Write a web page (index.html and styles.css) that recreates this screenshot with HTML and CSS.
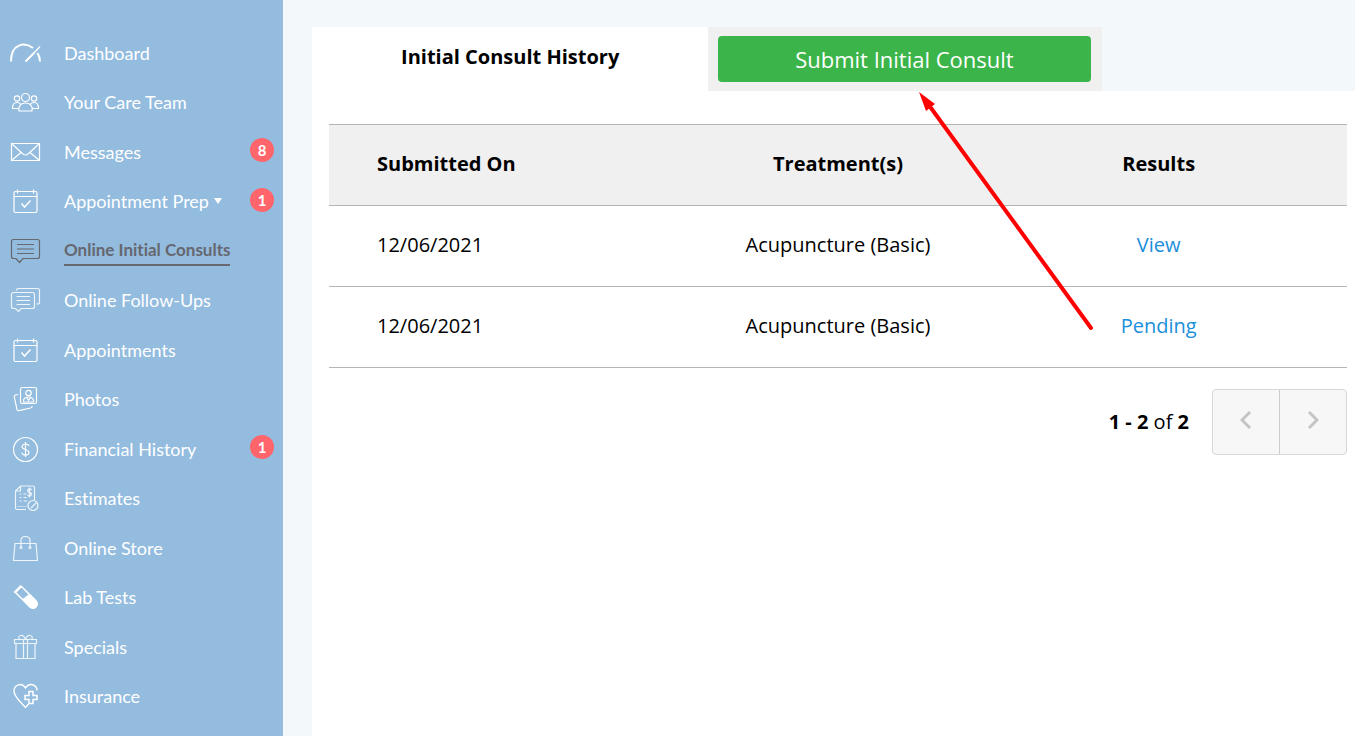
FILE: index.html
```
<!DOCTYPE html>
<html lang="en">
<head>
    <meta charset="UTF-8">
    <meta name="viewport" content="width=device-width, initial-scale=1.0">
    <title>Online Initial Consults</title>
    <link rel="stylesheet" href="styles.css">
</head>
<body>
    <div class="page">
        <nav class="sidebar">
            <ul class="menu">
                <li><a href="#">
                    <svg class="icon" viewBox="0 0 34 34"><path stroke-width="2" d="M3 25.500C3 7 17 6 25 12"/><path stroke-width="2" d="M29.500 17q2.500 4 2.500 8.500M17.500 25.500l8.500-8.500"/><path stroke-width="1.300" d="M25 18l7-7.500"/></svg>
                    <span>Dashboard</span></a></li>
                <li><a href="#">
                    <svg class="icon" viewBox="0 0 34 34"><circle cx="17.500" cy="12.500" r="4"/><circle cx="9" cy="13.500" r="2.700"/><circle cx="26" cy="13.500" r="2.700"/><path d="M11 26c-1-5 2-8 6.500-8s7.500 3 6.500 8zM10.500 23.500h-6c0-4 2-6 4.500-6 1.500 0 2.500.5 3.500 1.500M24.500 23.500h6c0-4-2-6-4.500-6-1.500 0-2.500.5-3.500 1.500"/></svg>
                    <span>Your Care Team</span></a></li>
                <li><a href="#">
                    <svg class="icon" viewBox="0 0 34 34"><path d="M3.500 8.500h28v17h-28zM3.500 8.500l11.500 10.500q2.500 2 5 0l11.500-10.500M3.500 25.500l9.500-8M31.500 25.500l-9.500-8"/></svg>
                    <span>Messages</span></a><b class="badge">8</b></li>
                <li><a href="#">
                    <svg class="icon" viewBox="0 0 34 34"><rect x="6" y="7.500" width="23" height="21" rx="1.500"/><path d="M6 12.500h23M9.500 5.500v4M25.500 5.500v4"/><path stroke-width="1.500" d="M13.500 19.500l3 3.500 6-6.500"/></svg>
                    <span>Appointment Prep</span><i class="caret"></i></a><b class="badge">1</b></li>
                <li class="active"><a href="#">
                    <svg class="icon" viewBox="0 0 34 34"><path d="M5.500 5.500h24q2 0 2 2v15q0 2-2 2H15l-3.500 4-3.500-4H5.500q-2 0-2-2v-15q0-2 2-2z"/><path d="M9 10.500h17M9 15h17M9 19.500h17"/></svg>
                    <span>Online Initial Consults</span></a></li>
                <li><a href="#">
                    <svg class="icon faint" viewBox="0 0 34 34"><path d="M5.500 9.500h19q2 0 2 2v12q0 2-2 2H13l-2.500 3-3-3h-2q-2 0-2-2v-12q0-2 2-2z"/><path d="M8.500 13.500H22M8.500 17.500H22M8.500 21.500H22M8.500 7.500q0-2 2-2h19q2 0 2 2V19q0 2-2 2h-1"/></svg>
                    <span>Online Follow-Ups</span></a></li>
                <li><a href="#">
                    <svg class="icon" viewBox="0 0 34 34"><rect x="6" y="7.500" width="23" height="21" rx="1.500"/><path d="M6 12.500h23M9.500 5.500v4M25.500 5.500v4"/><path stroke-width="1.500" d="M13.500 19.500l3 3.500 6-6.500"/></svg>
                    <span>Appointments</span></a></li>
                <li><a href="#">
                    <svg class="icon" viewBox="0 0 34 34"><rect x="12.500" y="5.500" width="16" height="16" rx="1.500"/><circle cx="20.500" cy="11" r="2.700"/><path d="M15.500 20v-2q1-3 5-3t5 3v2zM18.500 15.500l2 3 2-3M10 12.500l-2.500.5q-1.500.5-1.200 2L9 27.500q.5 1.500 2 1.200l11.500-2.700q1.500-.5 1.800-2"/></svg>
                    <span>Photos</span></a></li>
                <li><a href="#">
                    <svg class="icon" viewBox="0 0 34 34"><circle cx="17.500" cy="17.500" r="12"/><path d="M17.500 10v15M21 14q-.5-2-3.500-2t-3.500 2.500q0 2 3.500 3t3.500 3q0 2.500-3.500 2.500T14 20.500"/></svg>
                    <span>Financial History</span></a><b class="badge">1</b></li>
                <li><a href="#">
                    <svg class="icon faint" viewBox="0 0 34 34"><path d="M18 28.500H9q-1.500 0-1.500-1.500V10l5-5H25q1.500 0 1.500 1.500V19M7.500 10h5V5"/><circle cx="25" cy="24.500" r="5"/><path d="M23 27l5-5M11.500 13h2M15.500 13h3M11.500 16.500h2M15.500 16.500h3M11.500 20h2M15.500 20h3.500"/><path d="M9.500 25.500h9" stroke-dasharray="1 1"/><path stroke-width="1.300" d="M23.500 9q-.5-1-2-1t-1.800 1.500 1.800 2 1.800 2-1.800 1.500-2-1M21.500 6.500v10"/></svg>
                    <span>Estimates</span></a></li>
                <li><a href="#">
                    <svg class="icon faint" viewBox="0 0 34 34"><path d="M7 12.500h21l1.500 17h-24zM13 16V9.500q0-4 4.500-4t4.500 4V16"/><circle cx="13" cy="16.500" r="1"/><circle cx="22" cy="16.500" r="1"/></svg>
                    <span>Online Store</span></a></li>
                <li><a href="#">
                    <svg class="icon" viewBox="0 0 34 34"><path stroke-width="1.500" d="M6 12.500l7-7M7.500 12.500l6-6L28 21q2 3-.5 5.500t-5.500.5z"/><path class="solid" d="M15 19.500l6.500-5L28.500 21.500q2 3-.5 5.500t-5.500.5z"/></svg>
                    <span>Lab Tests</span></a></li>
                <li><a href="#">
                    <svg class="icon faint" viewBox="0 0 34 34"><path d="M6.500 9.500h22v4h-22zM8 13.500h19v15H8zM15.500 9.500v19M19.500 9.500v19M17.500 9.500c-1-3-3-4.500-5-4-2.500.5-2 4-.5 4M17.500 9.500c1-3 3-4.500 5-4 2.500.5 2 4 .5 4"/></svg>
                    <span>Specials</span></a></li>
                <li><a href="#">
                    <svg class="icon" viewBox="0 0 34 34"><path stroke-width="1.400" d="M20.500 25l-3 3.500C12 22 6 18 6 12c0-6.500 8-9 11.500-3C21 3 29 5.500 29 11.500"/><path stroke-width="1.500" d="M21 12.500h4v4h4v4h-4v4h-4v-4h-4v-4h4z"/></svg>
                    <span>Insurance</span></a></li>
            </ul>
        </nav>

        <main class="content">
            <div class="tabs">
                <h1 class="tab">Initial Consult History</h1>
                <div class="tab tab-submit"><button type="button" class="submit">Submit Initial Consult</button></div>
            </div>

            <section class="panel">
                <table class="history">
                    <thead>
                        <tr>
                            <th>Submitted On</th>
                            <th>Treatment(s)</th>
                            <th>Results</th>
                        </tr>
                    </thead>
                    <tbody>
                        <tr>
                            <td>12/06/2021</td>
                            <td>Acupuncture (Basic)</td>
                            <td><a href="#">View</a></td>
                        </tr>
                        <tr>
                            <td>12/06/2021</td>
                            <td>Acupuncture (Basic)</td>
                            <td><a href="#">Pending</a></td>
                        </tr>
                    </tbody>
                </table>

                <div class="pager">
                    <span class="pager-count"><b>1 - 2</b> of <b>2</b></span>
                    <div class="pager-buttons">
                        <button type="button" aria-label="Previous"><svg viewBox="0 0 12 20"><path d="M10 2L2 10l8 8"/></svg></button>
                        <button type="button" aria-label="Next"><svg viewBox="0 0 12 20"><path d="M2 2l8 8-8 8"/></svg></button>
                    </div>
                </div>
            </section>

            <svg class="arrow" viewBox="0 0 176 240"><path class="shaft" d="M172 236L12 16"/><path class="head" d="M0 0l16 12-9 7z"/></svg>
        </main>
    </div>
</body>
</html>
```
FILE: styles.css
```
* {
    box-sizing: border-box;
}
body {
    margin: 0;
    background-color: #f3f8fb;
    font-family: 'Open Sans', sans-serif;
    font-size: 20px;
    color: #000;
}
a {
    color: #1a8fdb;
    text-decoration: none;
}
button {
    font-family: inherit;
    cursor: pointer;
}
.page {
    display: flex;
    min-height: 100vh;
}

/* sidebar */
.sidebar {
    display: flex;
    flex: 0 0 283px;
    padding: 28px 9px 15px 8px;
    background-color: #93bcdf;
}
.menu {
    display: flex;
    flex-direction: column;
    width: 100%;
    margin: 0;
    padding: 0;
    list-style: none;
}
.menu li {
    display: flex;
    flex: 1;
    align-items: center;
    justify-content: space-between;
    min-height: 36px;
}
.menu a {
    display: flex;
    align-items: center;
    color: #fff;
    font-family: Lato, sans-serif;
    font-size: 18px;
    font-variant-ligatures: none;
    line-height: 28px;
}
.icon {
    width: 34px;
    height: 34px;
    margin-right: 22px;
    fill: none;
    stroke: currentColor;
    stroke-width: 1.2;
}
.faint {
    opacity: 0.85;
}
.solid {
    fill: currentColor;
}
.menu .active a {
    color: #66676f;
    font-size: 17px;
    font-weight: 700;
}
.active span {
    border-bottom: 2px solid #66676f;
}
.caret {
    margin-left: 5px;
    border: 4px solid transparent;
    border-top: 6px solid #fff;
    border-bottom: 0;
}
.badge {
    width: 24px;
    height: 24px;
    margin-bottom: 3px;
    border-radius: 50%;
    background-color: #ff656b;
    color: #fff;
    font-family: Lato, sans-serif;
    font-size: 15px;
    line-height: 24px;
    text-align: center;
}

/* content */
.content {
    position: relative;
    display: flex;
    flex: 1;
    flex-direction: column;
    padding: 27px 0 0 29px;
}
.tabs {
    display: flex;
    height: 64px;
}
.tab {
    flex: 0 0 38%;
    margin: 0;
    background-color: #fff;
    font-size: 20px;
    font-weight: 700;
    line-height: 60px;
    text-align: center;
}
.tab-submit {
    display: flex;
    flex-basis: 37.7%;
    padding: 9px 11px 9px 10px;
    background-color: #f0f0f0;
}
.submit {
    flex: 1;
    border: none;
    border-radius: 4px;
    background-color: #3bb54a;
    color: #fff;
    font-size: 22px;
}
.panel {
    flex: 1;
    padding: 33px 8px 0 17px;
    background-color: #fff;
}
.history {
    width: 100%;
    border-collapse: collapse;
    table-layout: fixed;
}
.history th, .history td {
    height: 81px;
    padding: 0 0 4px;
    border-top: 1px solid #b5b5b5;
    border-bottom: 1px solid #b5b5b5;
    text-align: center;
}
.history th {
    width: 37%;
    background-color: #f0f0f0;
}
.history th:nth-child(2) {
    width: 26%;
}
.history th:first-child, .history td:first-child {
    padding-left: 48px;
    text-align: left;
}
.pager {
    display: flex;
    align-items: center;
    justify-content: flex-end;
    gap: 23px;
    margin-top: 21px;
}
.pager-count {
    padding-bottom: 2px;
}
.pager-buttons {
    display: flex;
    border: 1px solid #d8d8d8;
    border-radius: 4px;
    background-color: #f7f7f7;
}
.pager-buttons button {
    width: 66px;
    height: 64px;
    padding: 0;
    border: none;
    background: none;
}
.pager-buttons button + button {
    width: 67px;
    border-left: 1px solid #ccc;
}
.pager-buttons svg {
    width: 12px;
    height: 20px;
    fill: none;
    stroke: #c4c4c4;
    stroke-width: 3;
}

/* pointer from the pending result to the submit button */
.arrow {
    position: absolute;
    top: 92px;
    left: 636px;
    width: 176px;
    height: 240px;
    pointer-events: none;
}
.shaft {
    fill: none;
    stroke: #f00;
    stroke-width: 4;
    stroke-linecap: round;
}
.head {
    fill: #f00;
}
```
